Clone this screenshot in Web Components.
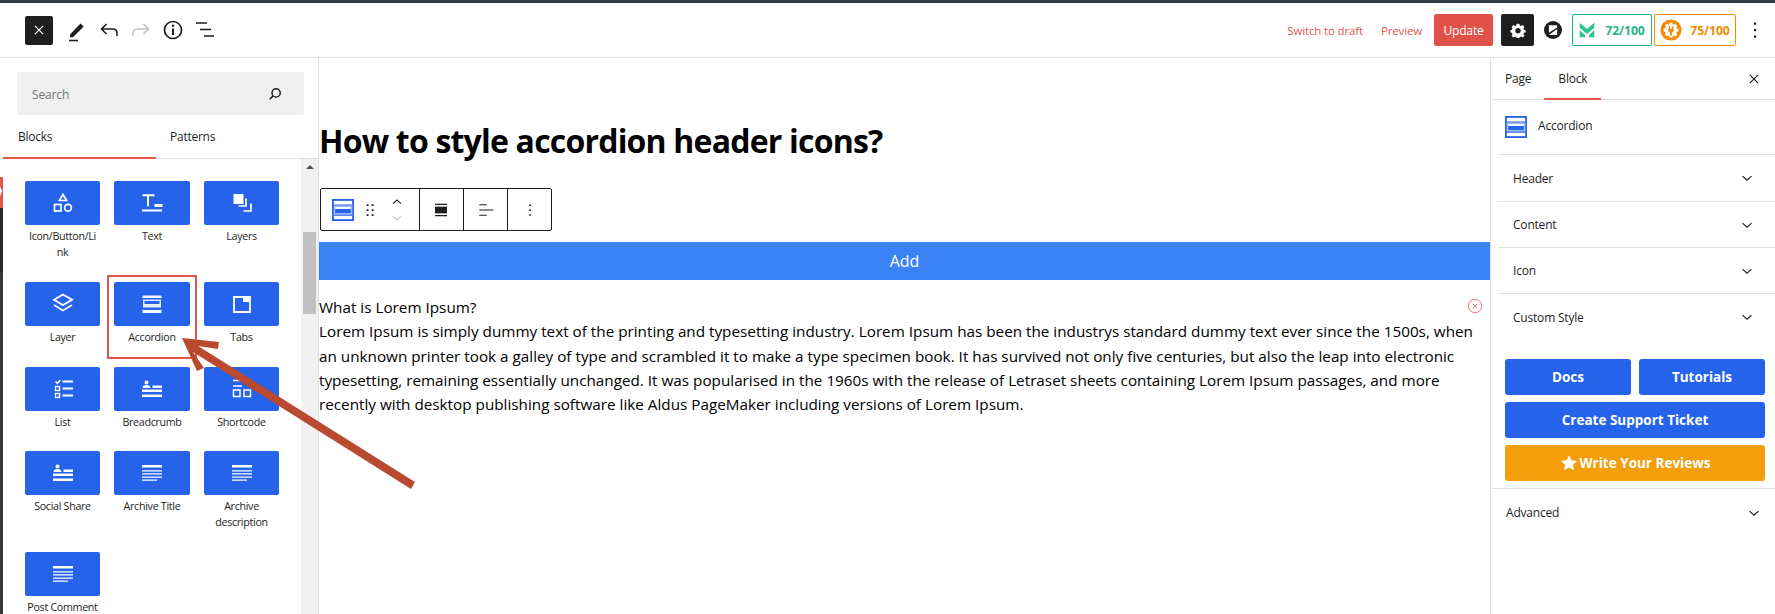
<!DOCTYPE html>
<html lang="en">
<head>
<meta charset="utf-8">
<title>Edit page</title>
<style>
  html, body { margin: 0; height: 100%; overflow: hidden; background: #fff; }
  body { font-family: "Open Sans", "Noto Sans", sans-serif; color: #1e1e1e; }
</style>
</head>
<body>
<wp-editor></wp-editor>
<script>
const ICONS = {
  close: `<path d="M6.5 6.5l11 11M17.5 6.5l-11 11" fill="none" stroke="currentColor" stroke-width="1.6"/>`,
  pencil: `<path d="M5 16.5 15.5 5.5l3.2 3L8 19.2H5z" fill="currentColor"/><path d="M4 22.5h9" stroke="currentColor" stroke-width="1.6"/>`,
  undo: `<path d="M9.5 6 4.5 11l5 5M5 11h10.5c3 0 4.5 2 4.5 4.5V18" fill="none" stroke="currentColor" stroke-width="1.6"/>`,
  redo: `<path d="M14.5 6l5 5-5 5M19 11H8.500c-3 0-4.500 2-4.500 4.500V18" fill="none" stroke="currentColor" stroke-width="1.6"/>`,
  info: `<circle cx="12" cy="12" r="8.500" fill="none" stroke="currentColor" stroke-width="1.700"/><path d="M12 10.500V17" stroke="currentColor" stroke-width="2"/><circle cx="12" cy="7.800" r="1.200" fill="currentColor"/>`,
  listview: `<path d="M3 5h11M7 11.500h11M11 18h10" stroke="currentColor" stroke-width="1.700"/>`,
  search: `<circle cx="13.500" cy="10.500" r="5.500" fill="none" stroke="currentColor" stroke-width="2"/><path d="M9.500 14.500 5 19" stroke="currentColor" stroke-width="2.200"/>`,
  chevron: `<path d="M6 9.500l6 5.500 6-5.500" fill="none" stroke="currentColor" stroke-width="1.600"/>`,
  up: `<path d="M6 14.500l6-5.500 6 5.500" fill="none" stroke="currentColor" stroke-width="1.600"/>`,
  gear: `<path fill-rule="evenodd" fill="currentColor" d="M10 2.500h4l.6 2.800 1.900.8 2.400-1.500 2.800 2.800-1.500 2.400.8 1.900 2.500.6v3.400l-2.500.6-.8 1.900 1.500 2.400-2.800 2.800-2.400-1.500-1.900.8-.6 2.500h-4l-.6-2.500-1.900-.8-2.400 1.500-2.800-2.800 1.500-2.400-.8-1.900-2.500-.6v-3.400l2.500-.6.8-1.900-1.500-2.400 2.800-2.800 2.400 1.500 1.900-.8zM12 9a4 4 0 1 0 0 8 4 4 0 0 0 0-8z"/>`,
  zlogo: `<circle cx="12" cy="12" r="12" fill="#1e1e1e"/><path fill="#fff" d="M6.500 5.500h11v3L6.500 15.500zM17.500 10.500v8h-11z"/>`,
  mlogo: `<path fill="#2dc391" d="M1 1l11 9.500L23 1v7.500L12 18 1 8.500zM1 12.500l8 7V23H1zM23 12.500l-8 7V23h8z"/>`,
  plug: `<circle cx="12" cy="12" r="11.500" fill="#f48a00"/><path fill="#fff" fill-rule="evenodd" d="M10.500 4h3l.4 1.800 1.300.6 1.600-1 2 2-1 1.600.6 1.300 1.800.4v3l-1.800.4-.6 1.300 1 1.600-2 2-1.600-1-1.300.6-.4 1.800h-3l-.4-1.800-1.300-.6-1.600 1-2-2 1-1.600-.6-1.300L4 13.500v-3l1.800-.4.6-1.300-1-1.600 2-2 1.600 1 1.300-.6z"/><path fill="#f48a00" d="M9.500 8h1.500v2.500h2V8h1.500v2.500H15V13l-2 1.800V18h-2v-3.200L9 13v-2.500h.5z"/>`,
  shapes: `<path d="M12 3.500l3.600 6h-7.200z" fill="none" stroke="#fff" stroke-width="1.700"/><rect x="3.500" y="13.500" width="6.500" height="6.500" fill="none" stroke="#fff" stroke-width="1.700"/><circle cx="17" cy="16.800" r="3.400" fill="none" stroke="#fff" stroke-width="1.700"/>`,
  text: `<path d="M2.500 4.300h12M8 4.300v11M14.500 14h8M2 19.500h20" fill="none" stroke="#fff" stroke-width="2"/><path d="M14.500 15.500h8" stroke="#fff" stroke-width="1"/>`,
  layers: `<rect x="3.500" y="3" width="10" height="10" fill="#fff"/><path d="M16 7.500v7.500H8.500M21 12.500V20h-7.500" fill="none" stroke="#fff" stroke-width="1.700"/>`,
  layer: `<path d="M12 2.500l9 5.300-9 5.300-9-5.300z" fill="none" stroke="#fff" stroke-width="1.800"/><path d="M3 13l9 5.500 9-5.500" fill="none" stroke="#fff" stroke-width="1.800"/>`,
  accordion: `<path fill="#fff" d="M2.500 3.500h19v2.500h-19zM2.500 18h19v3h-19z"/><path fill="#fff" d="M3 7.500h18v8H3zm1.500 1.500v3h15V9z" opacity=".85"/><path fill="#fff" d="M4.500 12h15v3h-15z" opacity=".35"/>`,
  tabs: `<path d="M4 5h16v15H4z" fill="none" stroke="#fff" stroke-width="1.800"/><path d="M13 5h7v5h-7z" fill="#fff"/>`,
  list: `<path d="M4.500 4.500l1.800 1.800 3-3.300" fill="none" stroke="#fff" stroke-width="1.600"/><path d="M11.500 4.500h10.500M11.500 11.500h10.500M11.500 18.500h10.500" stroke="#fff" stroke-width="2"/><rect x="4.500" y="9.500" width="4" height="4" fill="none" stroke="#fff" stroke-width="1.400"/><rect x="4.500" y="16.500" width="4" height="4" fill="none" stroke="#fff" stroke-width="1.400"/>`,
  crumb: `<circle cx="6.500" cy="5.500" r="2" fill="#fff"/><path fill="#fff" d="M2.500 11c.3-2.400 2-3 4-3s3.700.6 4 3zM2 12.500h20v2.500H2zM2 17.500h20V20H2zM12.500 8.500H22V11h-9.500z"/>`,
  shortcode: `<path d="M3 3.500h11M3 9h9" stroke="#fff" stroke-width="1.700"/><rect x="3.500" y="13" width="6.500" height="6.500" fill="none" stroke="#fff" stroke-width="1.500"/><rect x="14" y="13" width="6.500" height="6.500" fill="none" stroke="#fff" stroke-width="1.500"/>`,
  lines: `<path fill="#fff" d="M2 4h20v2.600H2zM2 9.200h20v1.300H2zM2 12.300h20v1.300H2zM2 15.500h20v1.300H2zM2 18.500h15v1.300H2z"/>`,
  star: `<path fill="#fff" d="M12 1.500l3.200 6.900 7.500.9-5.600 5.100 1.500 7.400L12 18.100l-6.600 3.700 1.500-7.400-5.600-5.100 7.500-.9z"/>`,
  accordionBlue: `<rect x="1" y="1" width="22" height="22" fill="none" stroke="#2563eb" stroke-width="2"/><path fill="#9db9f4" d="M2 7h20v10H2z"/><path fill="#fff" d="M3.500 8.800h17v2h-17z"/><path fill="#2563eb" d="M3.500 10.800h17v4.500h-17zM2 6h20v1.200H2zM2 17h20v1.200H2z"/>`,
  drag: `<path fill="currentColor" d="M8 5h2.200v2.200H8zM14 5h2.200v2.200H14zM8 11h2.200v2.200H8zM14 11h2.200v2.200H14zM8 17h2.200v2.200H8zM14 17h2.200v2.200H14z"/>`,
  wide: `<path d="M4 4.500h16M4 19.500h16" stroke="currentColor" stroke-width="1.800"/><rect x="4" y="7.500" width="16" height="9" fill="currentColor"/>`,
  alignLeft: `<path d="M3 5h10M3 12h19M3 19h10" stroke="currentColor" stroke-width="1.500"/>`,
  dots: `<path fill="currentColor" d="M11 4.500h2.200v2.300H11zM11 11h2.200v2.300H11zM11 17.500h2.200v2.300H11z"/>`,
  cross: `<circle cx="12" cy="12" r="10" fill="none" stroke="#ef6a6a" stroke-width="1.400"/><path d="M8.500 8.500l7 7M15.500 8.500l-7 7" stroke="#ef6a6a" stroke-width="1.400"/>`
};

const svg = (name, size = 24) =>
  `<svg width="${size}" height="${size}" viewBox="0 0 24 24" aria-hidden="true">${ICONS[name]}</svg>`;

class Base extends HTMLElement {
  connectedCallback() {
    if (this.shadowRoot) return;
    this.attachShadow({mode: 'open'});
    this.shadowRoot.innerHTML = this.render();
  }
}

class WpIcon extends Base {
  render() {
    const size = this.getAttribute('size') || 24;
    return `<style>:host{display:inline-flex;align-items:center;justify-content:center;line-height:0}</style>${svg(this.getAttribute('name'), size)}`;
  }
}

class WpEditor extends Base {
  render() {
    return `
    <style>
      :host { display: block; width: 1775px; height: 614px; position: relative; overflow: hidden; background: #fff; }
      .topbar { height: 3px; background: #32373c; }
      .main { display: flex; height: 556px; }
      .strip { position: absolute; left: 0; width: 3px; background: #23282c; }
      .strip.low { background: #32373c; }
      .strip.red { background: #e2574c; clip-path: polygon(0 0, 100% 0, 100% 100%, 0 100%, 0 62%, 70% 45%, 0 30%); }
      .marker { position: absolute; left: 107px; top: 275px; width: 90px; height: 84px; box-sizing: border-box; border: 2px solid #e0564c; }
      .arrow { position: absolute; left: 0; top: 0; pointer-events: none; }
    </style>
    <div class="topbar"></div>
    <editor-header></editor-header>
    <div class="main">
      <block-inserter></block-inserter>
      <editor-canvas></editor-canvas>
      <settings-sidebar></settings-sidebar>
    </div>
    <div class="strip" style="top:208px;height:64px"></div>
    <div class="strip red" style="top:177px;height:31px"></div>
    <div class="strip low" style="top:272px;height:342px"></div>
    <div class="marker"></div>
    <svg class="arrow" width="1775" height="614" aria-hidden="true">
      <polygon fill="#b94a2f" points="182,338 219,342 218,349 198,346 415,482 411,489 193,352 204,368 197,371"/>
    </svg>`;
  }
}

class EditorHeader extends Base {
  render() {
    return `
    <style>
      :host { display: flex; align-items: center; height: 55px; box-sizing: border-box; border-bottom: 1px solid #e0e0e0; padding: 0 8px 0 25px; font-size: 11.500px; letter-spacing: -.15px; }
      .close { width: 28px; height: 29px; background: #1e1e1e; color: #fff; border-radius: 2px; display: flex; align-items: center; justify-content: center; }
      .tools { display: flex; align-items: center; gap: 8px; margin-left: 12px; color: #1e1e1e; }
      .tools .off { color: #c4c4c4; }
      .spacer { flex: 1; }
      .link { color: #e2574c; }
      .update { width: 59px; height: 32px; background: #e2504a; color: #fff; border-radius: 2px; display: flex; align-items: center; justify-content: center; margin-left: 12px; font-size: 12px; }
      .gear { width: 33px; height: 32px; margin-left: 8px; background: #1e1e1e; color: #fff; border-radius: 2px; display: flex; align-items: center; justify-content: center; }
      .z { margin: 0 10px 0 10px; }
      .more { margin-left: 7px; }
    </style>
    <div class="close"><wp-icon name="close" size="18"></wp-icon></div>
    <div class="tools">
      <wp-icon name="pencil" size="24"></wp-icon>
      <wp-icon name="undo" size="24"></wp-icon>
      <wp-icon class="off" name="redo" size="24"></wp-icon>
      <wp-icon name="info" size="24"></wp-icon>
      <wp-icon name="listview" size="24"></wp-icon>
    </div>
    <div class="spacer"></div>
    <span class="link">Switch to draft</span>
    <span class="link" style="margin-left:18px">Preview</span>
    <div class="update">Update</div>
    <div class="gear"><wp-icon name="gear" size="16"></wp-icon></div>
    <wp-icon class="z" name="zlogo" size="18"></wp-icon>
    <score-badge color="#1fb589" icon="mlogo" width="80" iconsize="16" gap="10">72/100</score-badge>
    <score-badge color="#f48a00" icon="plug" width="82" iconsize="22" gap="8" style="margin-left:2px">75/100</score-badge>
    <wp-icon class="more" name="dots" size="24"></wp-icon>`;
  }
}

class ScoreBadge extends Base {
  render() {
    const color = this.getAttribute('color');
    return `
    <style>
      :host { display: flex; align-items: center; justify-content: center; gap: ${this.getAttribute('gap')}px; box-sizing: border-box; width: ${this.getAttribute('width')}px; height: 32px; border: 1px solid ${color}; border-radius: 2px; color: ${color}; font-size: 12.200px; font-weight: 700; letter-spacing: -.1px; }
    </style>
    <wp-icon name="${this.getAttribute('icon')}" size="${this.getAttribute('iconsize')}"></wp-icon>
    <slot></slot>`;
  }
}

class BlockInserter extends Base {
  render() {
    const blocks = [
      ['shapes', 'Icon/Button/Li<wbr>nk'], ['text', 'Text'], ['layers', 'Layers'],
      ['layer', 'Layer'], ['accordion', 'Accordion'], ['tabs', 'Tabs'],
      ['list', 'List'], ['crumb', 'Breadcrumb'], ['shortcode', 'Shortcode'],
      ['crumb', 'Social Share'], ['lines', 'Archive Title'], ['lines', 'Archive description'],
      ['lines', 'Post Comment']
    ];
    return `
    <style>
      :host { display: flex; flex-direction: column; width: 316px; margin-left: 3px; box-sizing: border-box; border-right: 1px solid #e0e0e0; overflow: hidden; font-size: 12px; letter-spacing: -.25px; }
      .search { display: flex; align-items: center; justify-content: space-between; height: 43px; margin: 14px 14px 0 14px; padding: 0 20px 0 15px; background: #f0f0f0; border-radius: 2px; color: #757575; }
      .search span { margin-top: 2px; letter-spacing: -.15px; }
      .search wp-icon { color: #1e1e1e; }
      .tabs { display: flex; height: 43px; margin-top: 0; border-bottom: 1px solid #e0e0e0; color: #1e1e1e; }
      .tab { width: 153px; padding-top: 13px; box-sizing: border-box; }
      .tab.active { border-bottom: 2px solid #e2574c; height: 44px; padding-left: 15px; }
      .tab + .tab { padding-left: 14px; }
      .body { display: flex; flex: 1; min-height: 0; }
      .grid { flex: 1; display: grid; grid-template-columns: 75px 76px 75px; column-gap: 14px; row-gap: 21.750px; align-content: start; padding: 22px 0 0 22px; }
      .bar { width: 17px; background: #f1f1f1; display: flex; flex-direction: column; align-items: center; box-sizing: border-box; padding-top: 6px; }
      .up { width: 0; height: 0; border: 4px solid transparent; border-top: 0; border-bottom: 4px solid #505050; }
      .thumb { width: 13px; height: 82px; margin-top: 63px; background: #c1c1c1; }
    </style>
    <div class="search"><span>Search</span><wp-icon name="search" size="18"></wp-icon></div>
    <div class="tabs"><div class="tab active">Blocks</div><div class="tab">Patterns</div></div>
    <div class="body">
      <div class="grid">
        ${blocks.map(([icon, label]) => `<block-card icon="${icon}">${label}</block-card>`).join('')}
      </div>
      <div class="bar"><div class="up"></div><div class="thumb"></div></div>
    </div>`;
  }
}

class BlockCard extends Base {
  render() {
    return `
    <style>
      :host { display: block; text-align: center; font-size: 10.700px; letter-spacing: -.3px; line-height: 16px; color: #1e1e1e; }
      .card { height: 44px; background: #2563eb; border-radius: 2px; display: flex; align-items: center; justify-content: center; margin-bottom: 3px; }
    </style>
    <div class="card"><wp-icon name="${this.getAttribute('icon')}" size="24"></wp-icon></div>
    <slot></slot>`;
  }
}

class EditorCanvas extends Base {
  render() {
    return `
    <style>
      :host { display: block; flex: 1; min-width: 0; color: #000; }
      h1 { margin: 0; padding: 62px 0 0 0; font-size: 32px; letter-spacing: -.8px; line-height: 42px; font-weight: 700; }
      block-toolbar { margin: 26px 0 11px 1px; }
      .add { height: 38px; background: #3b82f6; color: #fff; font-size: 16px; display: flex; align-items: center; justify-content: center; }
      .item { position: relative; padding: 15px 0 0 0; font-size: 15.270px; line-height: 24.250px; }
      .remove { position: absolute; right: 7px; top: 18px; }
    </style>
    <h1>How to style accordion header icons?</h1>
    <block-toolbar></block-toolbar>
    <div class="add">Add</div>
    <div class="item">
      <wp-icon class="remove" name="cross" size="16"></wp-icon>
      <div>What is Lorem Ipsum?</div>
      <div>Lorem Ipsum is simply dummy text of the printing and typesetting industry. Lorem Ipsum has been the industrys standard dummy text ever since the 1500s, when<br>an unknown printer took a galley of type and scrambled it to make a type specimen book. It has survived not only five centuries, but also the leap into electronic<br>typesetting, remaining essentially unchanged. It was popularised in the 1960s with the release of Letraset sheets containing Lorem Ipsum passages, and more<br>recently with desktop publishing software like Aldus PageMaker including versions of Lorem Ipsum.</div>
    </div>`;
  }
}

class BlockToolbar extends Base {
  render() {
    return `
    <style>
      :host { display: flex; width: 232px; height: 43px; box-sizing: border-box; border: 1px solid #1e1e1e; border-radius: 2px; color: #1e1e1e; background: #fff; }
      .sec { display: flex; align-items: center; justify-content: center; border-left: 1px solid #1e1e1e; width: 44px; box-sizing: border-box; }
      .first { width: 98px; border-left: 0; justify-content: flex-start; padding-left: 11px; }
      .mover { display: flex; flex-direction: column; margin-left: 9px; }
      .mover wp-icon + wp-icon { color: #c4c4c4; }
    </style>
    <div class="sec first">
      <wp-icon name="accordionBlue" size="22"></wp-icon>
      <wp-icon name="drag" size="20" style="margin-left:6px"></wp-icon>
      <div class="mover"><wp-icon name="up" size="16"></wp-icon><wp-icon name="chevron" size="16"></wp-icon></div>
    </div>
    <div class="sec"><wp-icon name="wide" size="18" style="margin-right:2px"></wp-icon></div>
    <div class="sec"><wp-icon name="alignLeft" size="18"></wp-icon></div>
    <div class="sec"><wp-icon name="dots" size="18"></wp-icon></div>`;
  }
}

class SettingsSidebar extends Base {
  render() {
    return `
    <style>
      :host { display: block; width: 285px; box-sizing: border-box; border-left: 1px solid #e0e0e0; font-size: 12px; letter-spacing: -.2px; color: #1e1e1e; }
      .tabs { display: flex; align-items: center; height: 42px; box-sizing: border-box; border-bottom: 1px solid #e0e0e0; padding-left: 14px; position: relative; }
      .tab { height: 42px; box-sizing: border-box; padding-top: 12px; }
      .tab.active { margin-left: 13px; padding: 12px 14px 0; border-bottom: 2px solid #e2574c; }
      .tabs wp-icon { margin-left: auto; margin-right: 12px; }
      .head { display: flex; align-items: center; gap: 11px; height: 54px; padding-left: 14px; }
      .head span { margin-top: -4px; }
      .panels { margin-left: 7px; border-top: 1px solid #e0e0e0; }
      settings-panel:first-child { height: 47px; }
      .actions { display: grid; grid-template-columns: 126px 126px; gap: 7px 8px; margin: 19px 0 0 14px; padding-bottom: 7px; }
      .wide { grid-column: 1 / 3; }
      .advanced { display: flex; align-items: center; justify-content: space-between; height: 47px; padding: 0 12px 0 15px; border-top: 1px solid #e0e0e0; }
    </style>
    <div class="tabs"><div class="tab">Page</div><div class="tab active">Block</div><wp-icon name="close" size="18"></wp-icon></div>
    <div class="head"><wp-icon name="accordionBlue" size="22"></wp-icon><span>Accordion</span></div>
    <div class="panels">
      <settings-panel>Header</settings-panel>
      <settings-panel>Content</settings-panel>
      <settings-panel>Icon</settings-panel>
      <settings-panel last>Custom Style</settings-panel>
    </div>
    <div class="actions">
      <action-button>Docs</action-button>
      <action-button>Tutorials</action-button>
      <action-button class="wide">Create Support Ticket</action-button>
      <action-button class="wide" color="#f59e0b" icon="star">Write Your Reviews</action-button>
    </div>
    <div class="advanced"><span>Advanced</span><wp-icon name="chevron" size="18"></wp-icon></div>`;
  }
}

class SettingsPanel extends Base {
  render() {
    const border = this.hasAttribute('last') ? '0' : '1px solid #e0e0e0';
    return `
    <style>
      :host { display: flex; align-items: center; justify-content: space-between; height: 46px; box-sizing: border-box; border-bottom: ${border}; padding: 0 19px 0 15px; }
    </style>
    <span><slot></slot></span><wp-icon name="chevron" size="18"></wp-icon>`;
  }
}

class ActionButton extends Base {
  render() {
    const icon = this.getAttribute('icon');
    return `
    <style>
      :host { display: flex; align-items: center; justify-content: center; gap: 2px; height: 36px; background: ${this.getAttribute('color') || '#2563eb'}; color: #fff; border-radius: 3px; font-size: 13.500px; letter-spacing: 0; font-weight: 700; }
    </style>
    ${icon ? `<wp-icon name="${icon}" size="18"></wp-icon>` : ''}<slot></slot>`;
  }
}

customElements.define('wp-icon', WpIcon);
customElements.define('score-badge', ScoreBadge);
customElements.define('block-card', BlockCard);
customElements.define('block-toolbar', BlockToolbar);
customElements.define('settings-panel', SettingsPanel);
customElements.define('action-button', ActionButton);
customElements.define('editor-header', EditorHeader);
customElements.define('block-inserter', BlockInserter);
customElements.define('editor-canvas', EditorCanvas);
customElements.define('settings-sidebar', SettingsSidebar);
customElements.define('wp-editor', WpEditor);
</script>
</body>
</html>
